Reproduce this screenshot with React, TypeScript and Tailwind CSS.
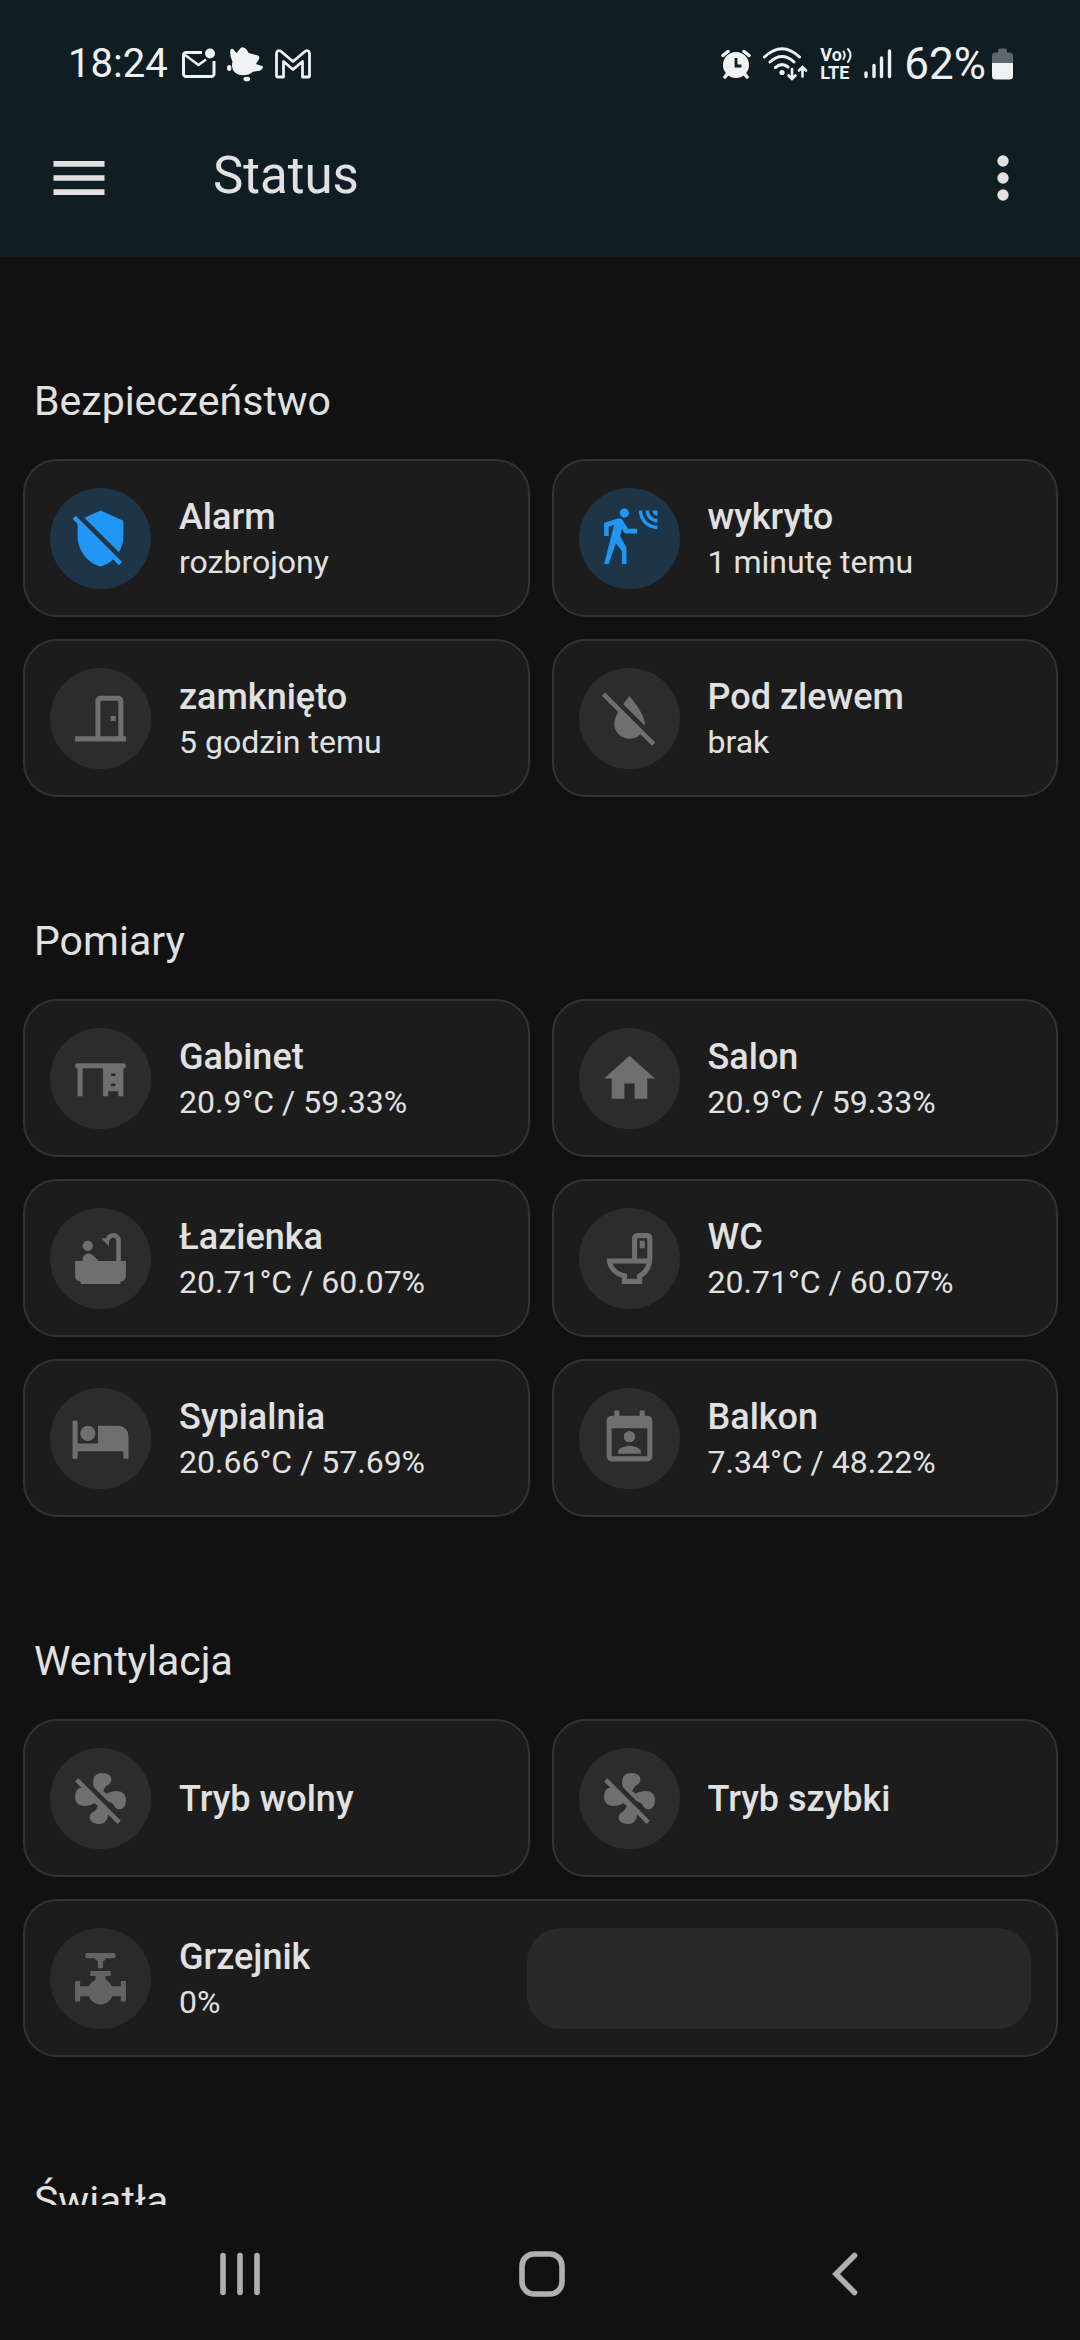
import type { ReactNode } from "react";

type Tone = "blue" | "grey" | "dim";

const tones: Record<Tone, string> = {
  blue: "bg-[#1e3447] text-[#2196f3]",
  grey: "bg-[#2c2c2c] text-[#6f6f6f]",
  dim: "bg-[#2a2a2a] text-[#636363]",
};

const icons = {
  shieldOff:
    "M1,4.27L2.28,3L20.5,21.22L19.23,22.5L17,20.25C15.57,21.57 13.87,22.54 12,23C6.84,21.74 3,16.55 3,11V6.27L1,4.27M12,1L21,5V11C21,13.28 20.35,15.5 19.23,17.41L5.65,3.82L12,1Z",
  motion:
    "M10,0.2C9,0.2 8.2,1 8.2,2C8.2,3 9,3.8 10,3.8C11,3.8 11.8,3 11.8,2C11.8,1 11,0.2 10,0.2M15.67,1A7.33,7.33 0 0,0 23,8.33V7A6,6 0 0,1 17,1H15.67M18.33,1C18.33,3.58 20.42,5.67 23,5.67V4.33C21.16,4.33 19.67,2.84 19.67,1H18.33M21,1A2,2 0 0,0 23,3V1H21M7.92,4.03C7.75,4.03 7.58,4.06 7.42,4.11L2,5.8V11H3.8V7.33L5.91,6.67L2,22H3.8L6.67,13.89L9,17V22H10.8V15.59L8.31,11.05L9.04,8.18L10.12,10H15V8.2H11.38L9.38,4.87C9.08,4.37 8.54,4.03 7.92,4.03Z",
  door: "M16,11H18V13H16V11M12,3H19C20.11,3 21,3.89 21,5V19H22V21H2V19H10V5C10,3.89 10.89,3 12,3M12,5V19H19V5H12Z",
  waterOff:
    "M20.84 22.73L16.29 18.18C15.2 19.3 13.69 20 12 20C8.69 20 6 17.31 6 14C6 12.67 6.67 11.03 7.55 9.44L1.11 3L2.39 1.73L22.11 21.46L20.84 22.73M18 14C18 10 12 3.25 12 3.25S10.84 4.55 9.55 6.35L17.95 14.75C18 14.5 18 14.25 18 14Z",
  desk: "M3 6H21A1 1 0 0 1 21 8V19H19V17H15V19H13V8H5V19H3V8A1 1 0 0 1 3 6M16.5 10A.5 .5 0 0 0 16.5 11H17.5A.5 .5 0 0 0 17.5 10ZM16.5 14A.5 .5 0 0 0 16.5 15H17.5A.5 .5 0 0 0 17.5 14Z",
  home: "M10,20V14H14V20H19V12H22L12,3L2,12H5V20H10Z",
  bath: "M7 5A2 2 0 1 1 7 9A2 2 0 1 1 7 5M20 13V5A3 3 0 0 0 17 2C15.8 2 14.7 2.9 14.2 4H12.3L15.3 7.2V5.4C15.6 4.4 16.2 3.7 17 3.7C17.7 3.7 18.2 4.3 18.2 5V13H11.3L8.9 10.7C8.4 10.2 7.8 10 7.2 10C6 10 5 11 5 12.2V13H2V19A2 2 0 0 0 4 21A1 1 0 0 0 5 22H19A1 1 0 0 0 20 21A2 2 0 0 0 22 19V13Z",
  toilet:
    "M9 22H17V19.5C19.4 17.9 21 15.1 21 12V4A2 2 0 0 0 19 2H15A2 2 0 0 0 13 4V12H3C3 15.6 5.5 18.6 9 19.6ZM15 4H19V12H15ZM16 5V8H18V5ZM5.3 14H18.7C18.1 15.9 16.8 17.4 15 18.3V20H11V18C8.5 17.8 6.2 16.3 5.3 14Z",
  bed: "M19,7H11V14H3V5H1V20H3V17H21V20H23V11A4,4 0 0,0 19,7M7,13A3,3 0 0,0 10,10A3,3 0 0,0 7,7A3,3 0 0,0 4,10A3,3 0 0,0 7,13Z",
  calendar:
    "M19 3H18V1H16V3H8V1H6V3H5A2 2 0 0 0 3 5V19A2 2 0 0 0 5 21H19A2 2 0 0 0 21 19V5A2 2 0 0 0 19 3M19 19H5V8H19V19M12 9A2.25 2.25 0 1 1 12 13.5A2.25 2.25 0 1 1 12 9M16.5 18H7.5V17.25C7.5 15.75 10.5 14.9 12 14.9S16.5 15.75 16.5 17.25Z",
  fanOff:
    "M12.5,2C9.64,2 8.57,4.55 9.29,7.47L15,13.16C15.87,13.37 16.81,13.81 17.28,14.73C18.46,17.1 22.03,17 22.03,12.5C22.03,8.92 18.05,8.13 14.35,10.13C14.03,9.73 13.61,9.42 13.13,9.22C13.32,8.29 13.76,7.24 14.75,6.75C17.11,5.57 17,2 12.5,2M3.28,4L2,5.27L4.47,7.73C3.22,7.74 2,8.87 2,11.5C2,15.07 5.96,15.85 9.65,13.87C9.97,14.27 10.4,14.59 10.89,14.79C10.69,15.71 10.25,16.75 9.27,17.24C6.91,18.42 7,22 11.5,22C13.8,22 14.94,20.36 14.94,18.21L18.73,22L20,20.72L3.28,4Z",
  valve:
    "M7 2H17A1 1 0 0 1 17 4H14V4.6L13 5.3V8H11V5.3L10 4.6V4H7A1 1 0 0 1 7 2M8 9H16V11H14V12.5C15.2 13.1 16 14 16.5 15H20V13H22V21H20V19H16.6C15.8 21 14 22.2 12 22.2S8.2 21 7.4 19H4V21H2V13H4V15H7.5C8 14 8.8 13.1 10 12.5V11H8Z",
};

type IconName = keyof typeof icons;

type Entity = { icon: IconName; name: string; state?: string; tone?: Tone };

const security: Entity[] = [
  { icon: "shieldOff", name: "Alarm", state: "rozbrojony", tone: "blue" },
  { icon: "motion", name: "wykryto", state: "1 minutę temu", tone: "blue" },
  { icon: "door", name: "zamknięto", state: "5 godzin temu" },
  { icon: "waterOff", name: "Pod zlewem", state: "brak" },
];

const measurements: Entity[] = [
  { icon: "desk", name: "Gabinet", state: "20.9°C / 59.33%" },
  { icon: "home", name: "Salon", state: "20.9°C / 59.33%" },
  { icon: "bath", name: "Łazienka", state: "20.71°C / 60.07%" },
  { icon: "toilet", name: "WC", state: "20.71°C / 60.07%" },
  { icon: "bed", name: "Sypialnia", state: "20.66°C / 57.69%" },
  { icon: "calendar", name: "Balkon", state: "7.34°C / 48.22%" },
];

const ventilation: Entity[] = [
  { icon: "fanOff", name: "Tryb wolny" },
  { icon: "fanOff", name: "Tryb szybki" },
];

function EntityInfo({ icon, name, state, tone = "grey" }: Entity) {
  return (
    <span className="flex min-w-0 flex-1 items-center gap-7">
      <span className={`flex size-[101px] shrink-0 items-center justify-center rounded-full ${tones[tone]}`}>
        <svg viewBox="0 0 24 24" className="size-[61px]" fill="currentColor" fillRule="evenodd" aria-hidden="true">
          <path d={icons[icon]} />
        </svg>
      </span>
      <span className="flex min-w-0 flex-col pt-0.5">
        <span className="truncate text-[36px] leading-[46px] font-medium">{name}</span>
        {state && <span className="truncate text-[32px] leading-[44px]">{state}</span>}
      </span>
    </span>
  );
}

const cardBox = "flex min-h-[158px] items-center rounded-[34px] border-2 border-[#333333] bg-[#1c1c1c] px-[25px] text-left";

function EntityCard(props: Entity) {
  return (
    <button type="button" className={cardBox}>
      <EntityInfo {...props} />
    </button>
  );
}

function Section({ title, children }: { title: string; children?: ReactNode }) {
  return (
    <section>
      <h2 className="px-[11px] pt-[120px] pb-[34px] text-[41px] leading-[48px]">{title}</h2>
      <div className="grid grid-cols-2 gap-[22px]">{children}</div>
    </section>
  );
}

function StatusBar() {
  return (
    <div className="flex h-[100px] items-center justify-between pt-7 pr-[67px] pl-[68px] text-[#eff1f3]">
      <div className="flex items-center gap-3.5">
        <span className="text-[40px] leading-[48px]">18:24</span>
        <div className="flex items-center gap-[11px]">
          <svg width="34" height="32" viewBox="0 0 34 32" fill="none" stroke="currentColor" aria-hidden="true">
            <path d="M20 4.5H4A2.5 2.5 0 0 0 1.5 7V26A2.5 2.5 0 0 0 4 28.5H29.5A2.5 2.5 0 0 0 32 26V13" strokeWidth="3" />
            <path d="M3 7L16.500 17L24 11.500" strokeWidth="2.600" />
            <circle cx="28" cy="5.500" r="5" fill="currentColor" stroke="none" />
          </svg>
          <svg width="37" height="35" viewBox="0 0 37 35" fill="currentColor" aria-hidden="true">
            <path d="M3.400 3Q4.500 1 6 2L9.600 6L13 1.700Q16.200 -1.500 20 3L21.700 6L31 8.500Q33 9.500 32 12.300L29 17L36.200 19.500Q36 22 33 23.800L26 24.700Q22 28.300 16.200 28.300Q10 28 7 24.500T5.500 14.700Q2.500 9 3.400 3Z" />
            <ellipse cx="2.200" cy="21" rx="2.200" ry="3" />
            <ellipse cx="19.800" cy="32" rx="3.300" ry="2.300" />
          </svg>
          <svg width="36" height="30" viewBox="0 0 36 30" fill="none" stroke="currentColor" strokeWidth="2.800" strokeLinejoin="round" aria-hidden="true">
            <path d="M1.500 26.500V4.500Q2 0.500 5.500 2L18 12.500L30.500 2Q34 0.500 34.500 4.500V26.500Q34.500 28 33 28H27.500V12.500L18 20.500L8.500 12.500V28H3Q1.500 28 1.500 26.500Z" />
          </svg>
        </div>
      </div>
      <div className="flex items-center gap-3">
        <svg width="30" height="30" viewBox="0 0 30 30" aria-hidden="true">
          <path d="M7 24L4 28M23 24L26 28M2 6.500L7 2.500M28 6.500L23 2.500" stroke="currentColor" strokeWidth="3.500" strokeLinecap="round" />
          <circle cx="15" cy="16" r="13" fill="currentColor" />
          <path d="M15 9V17H20.500" fill="none" stroke="#101e24" strokeWidth="2.800" />
        </svg>
        <svg width="45" height="34" viewBox="0 0 45 34" fill="none" stroke="currentColor" strokeWidth="3" strokeLinecap="round" aria-hidden="true">
          <path d="M1.500 10Q19 -6.500 36.500 10M7 15Q19 4 31 15M12.500 20.500Q19 15 25 20" />
          <circle cx="19" cy="25.500" r="2.600" fill="currentColor" stroke="none" />
          <path d="M29 22V31.500M25.500 28.500L29 32L32.500 28.500M39.500 29.500V20.500M36 23.500L39.500 20L43 23.500" strokeWidth="2.600" />
        </svg>
        <div className="flex w-8 flex-col text-[18px] leading-[18px] font-bold">
          <span className="flex items-center">
            Vo
            <svg width="10" height="17" viewBox="0 0 10 17" fill="none" stroke="currentColor" strokeWidth="2" strokeLinecap="round" aria-hidden="true">
              <path d="M1.500 4.500Q4 8 1.500 12M6 2Q11 8 6 15" />
            </svg>
          </span>
          <span>LTE</span>
        </div>
        <svg width="28" height="30" viewBox="0 0 28 30" stroke="currentColor" strokeWidth="3.400" strokeLinecap="round" aria-hidden="true">
          <path d="M2 24V27.500M10 16.500V27.500M17.500 9V27.500M25.500 2V27.500" />
        </svg>
        <div className="flex items-center gap-1.5">
          <span className="text-[44px] leading-[48px]">62%</span>
          <svg width="21" height="32" viewBox="0 0 21 32" fill="currentColor" aria-hidden="true">
            <path d="M0 15V8Q0 5 3 4.500H6V2.500Q6 .5 8 .5H13Q15 .5 15 2.500V4.500H18Q21 5 21 8V15Z" opacity=".35" />
            <path d="M0 15H21V28Q21 31.500 17.500 31.500H3.500Q0 31.500 0 28Z" />
          </svg>
        </div>
      </div>
    </div>
  );
}

function Toolbar() {
  return (
    <div className="flex h-[157px] items-center pr-[43px] pb-0.5 pl-[45px]">
      <button type="button" aria-label="Menu">
        <svg viewBox="0 0 24 24" className="size-[68px]" fill="currentColor">
          <path d="M3,6H21V8H3V6M3,11H21V13H3V11M3,16H21V18H3V16Z" />
        </svg>
      </button>
      <h1 className="ml-[100px] flex-1 pb-1 text-[51px] leading-[60px]">Status</h1>
      <button type="button" aria-label="Więcej opcji">
        <svg viewBox="0 0 24 24" className="size-[68px]" fill="currentColor">
          <circle cx="12" cy="6" r="2" />
          <circle cx="12" cy="12" r="2" />
          <circle cx="12" cy="18" r="2" />
        </svg>
      </button>
    </div>
  );
}

function NavigationBar() {
  return (
    <nav className="grid h-[135px] shrink-0 grid-cols-3 items-center pt-0.5 pr-[84px] pl-[89px] text-[#b0b0b0]">
      <button type="button" aria-label="Ostatnie" className="flex justify-center">
        <svg width="46" height="46" viewBox="0 0 46 46" stroke="currentColor" strokeWidth="5.600" strokeLinecap="round">
          <path d="M6 4.500V41.500M23 4.500V41.500M40 4.500V41.500" />
        </svg>
      </button>
      <button type="button" aria-label="Ekran główny" className="flex justify-center">
        <svg width="46" height="46" viewBox="0 0 46 46" fill="none" stroke="currentColor" strokeWidth="5.600">
          <rect x="3" y="3" width="40" height="40" rx="12" />
        </svg>
      </button>
      <button type="button" aria-label="Wstecz" className="flex justify-center">
        <svg width="46" height="46" viewBox="0 0 46 46" fill="none" stroke="currentColor" strokeWidth="5.600" strokeLinecap="round">
          <path d="M32.500 4.500L14 23L32.500 41.500" />
        </svg>
      </button>
    </nav>
  );
}

export default function App() {
  return (
    <div className="flex h-screen flex-col bg-[#111111] font-['Roboto',sans-serif] text-[#e1e1e1]">
      <header className="shrink-0 bg-[#101e24]">
        <StatusBar />
        <Toolbar />
      </header>
      <main className="min-h-0 flex-1 overflow-y-auto pr-[22px] pl-[23px] [scrollbar-width:none]">
        <Section title="Bezpieczeństwo">
          {security.map((item) => (
            <EntityCard key={item.name} {...item} />
          ))}
        </Section>
        <Section title="Pomiary">
          {measurements.map((item) => (
            <EntityCard key={item.name} {...item} />
          ))}
        </Section>
        <Section title="Wentylacja">
          {ventilation.map((item) => (
            <EntityCard key={item.name} {...item} />
          ))}
          <div className={`col-span-2 ${cardBox}`}>
            <EntityInfo icon="valve" name="Grzejnik" state="0%" tone="dim" />
            <input
              type="range"
              min={0}
              max={100}
              defaultValue={0}
              aria-label="Grzejnik"
              className="h-[101px] w-[calc(50%+14px)] appearance-none rounded-[34px] bg-[#292929] [&::-webkit-slider-thumb]:appearance-none [&::-webkit-slider-thumb]:opacity-0"
            />
          </div>
        </Section>
        <Section title="Światła" />
      </main>
      <NavigationBar />
    </div>
  );
}
